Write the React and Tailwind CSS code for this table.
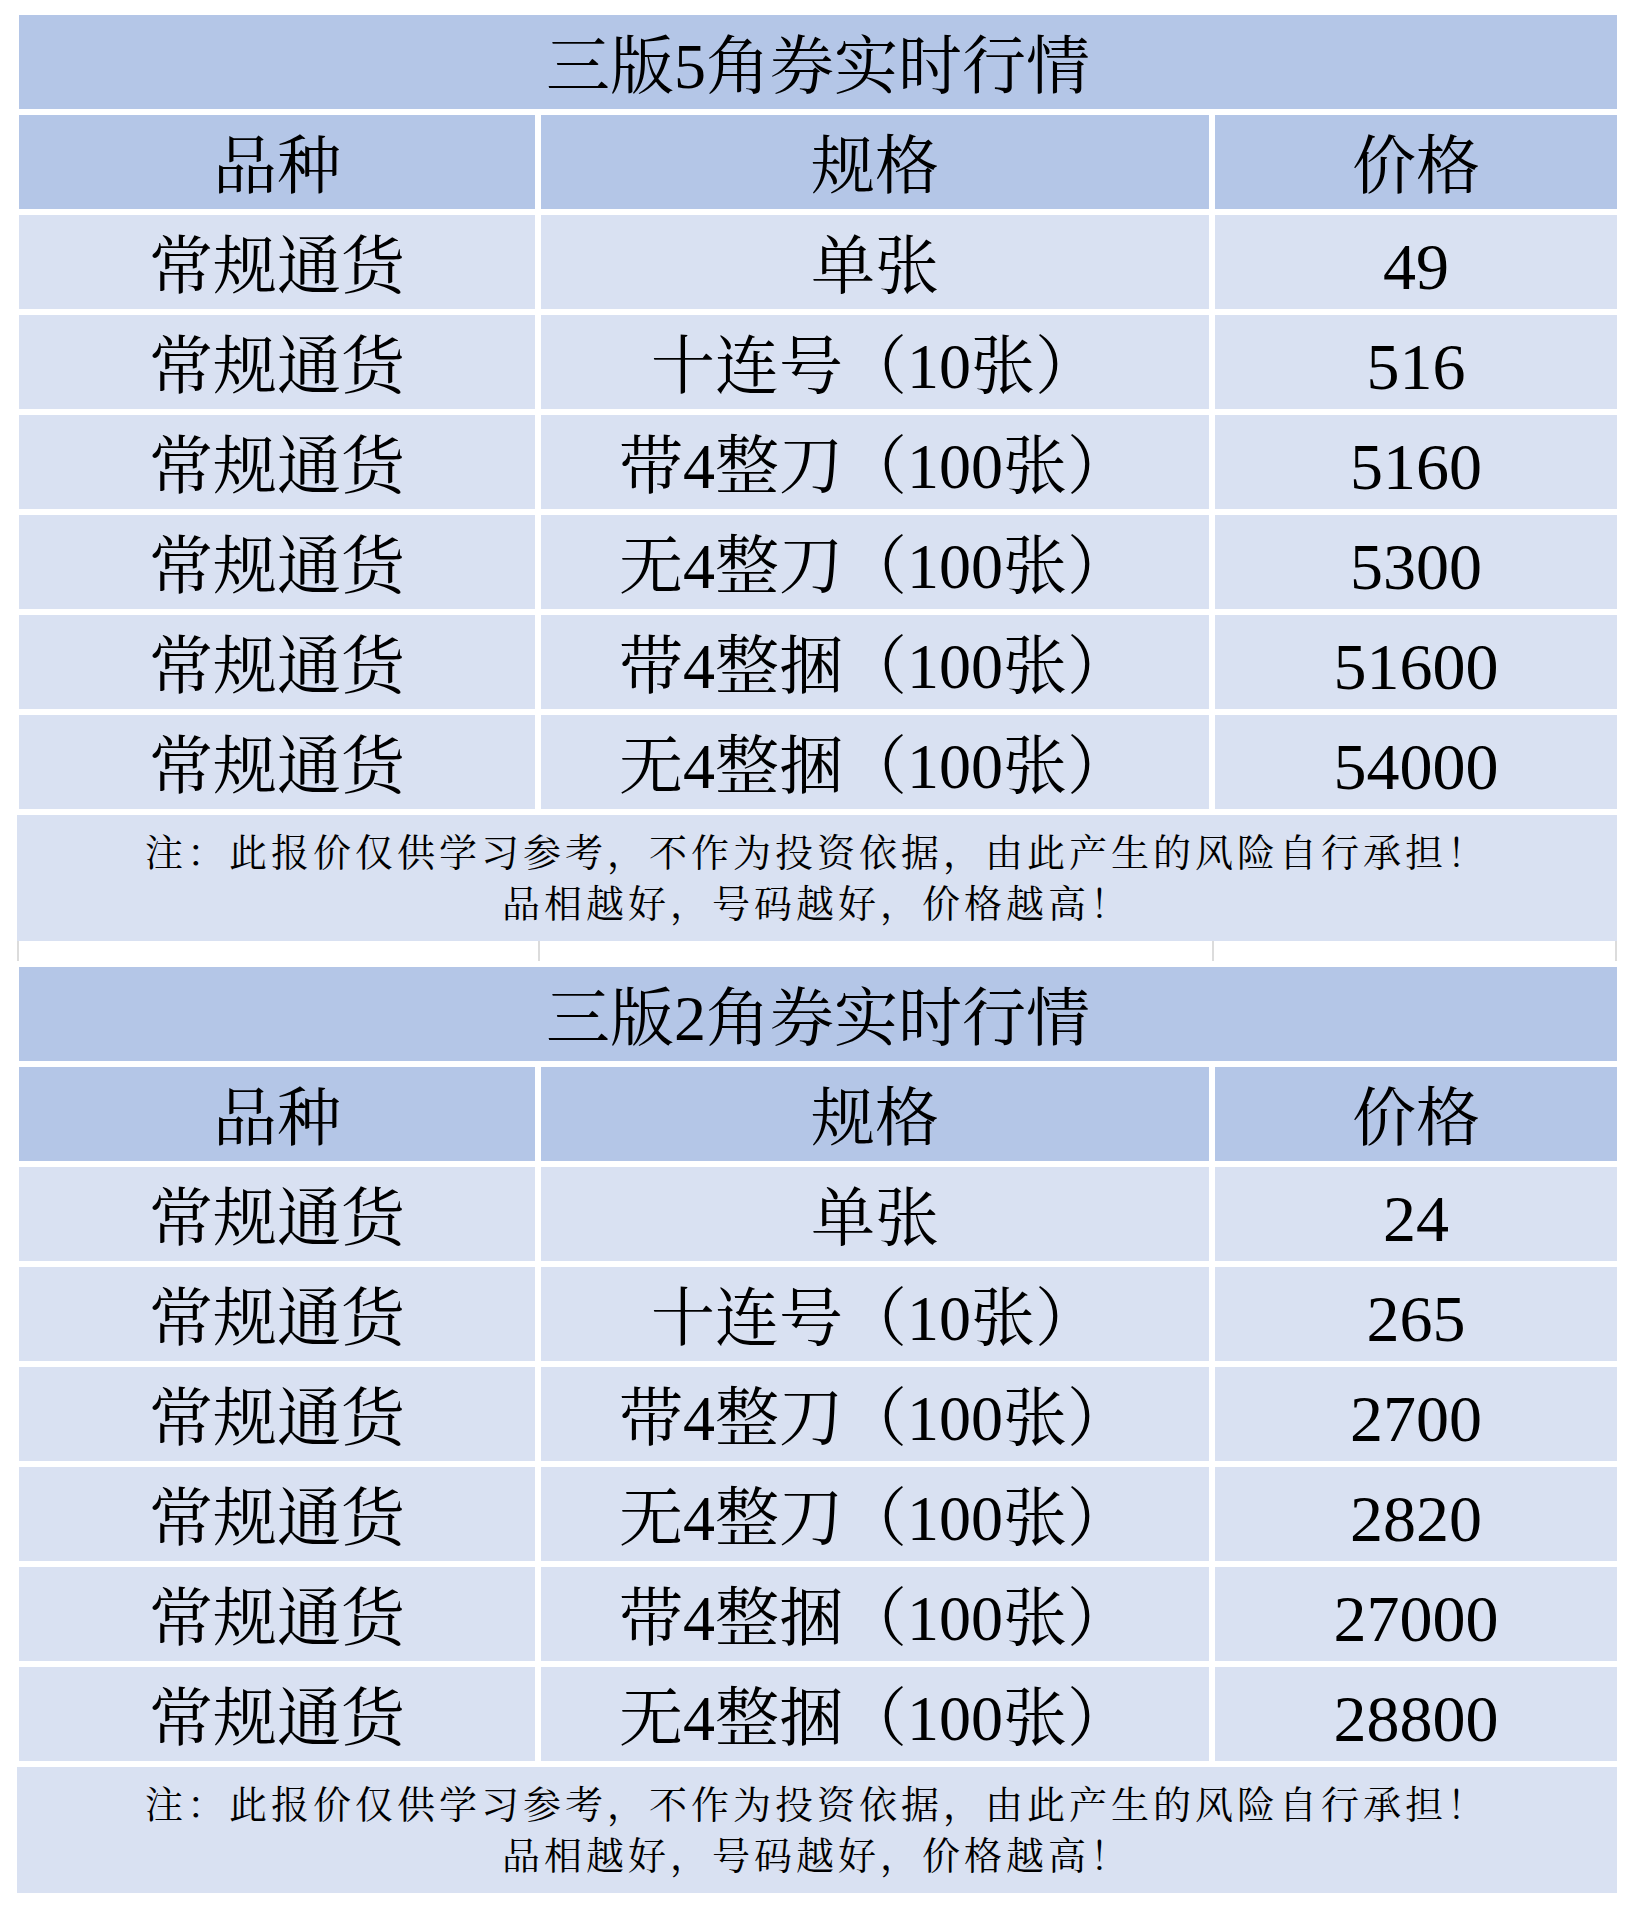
import React from "react";

const FONT = { fontFamily: '"Liberation Serif", "Noto Serif CJK SC", "Noto Sans CJK SC", serif' };

const sections = [
  {
    title: "三版5角券实时行情",
    rows: [
      ["单张", "49"],
      ["十连号（10张）", "516"],
      ["带4整刀（100张）", "5160"],
      ["无4整刀（100张）", "5300"],
      ["带4整捆（100张）", "51600"],
      ["无4整捆（100张）", "54000"],
    ],
  },
  {
    title: "三版2角券实时行情",
    rows: [
      ["单张", "24"],
      ["十连号（10张）", "265"],
      ["带4整刀（100张）", "2700"],
      ["无4整刀（100张）", "2820"],
      ["带4整捆（100张）", "27000"],
      ["无4整捆（100张）", "28800"],
    ],
  },
];

function Cell({ children, head, big }) {
  return (
    <div
      className={`h-[94px] flex items-center justify-center pt-[10px] leading-none text-black ${
        big ? "text-[66px]" : "text-[64px]"
      } ${head ? "bg-[#b4c6e7]" : "bg-[#d9e1f2]"}`}
    >
      {children}
    </div>
  );
}

function Row({ cells, head }) {
  return (
    <div className="grid grid-cols-[516px_668px_402px] gap-[6px]">
      {cells.map((c, i) => (
        <Cell key={i} head={head} big={!head && i === 2}>
          {c}
        </Cell>
      ))}
    </div>
  );
}

function Note() {
  return (
    <div className="-ml-[2px] w-[1600px] h-[126px] bg-[#d9e1f2] flex flex-col items-center justify-center pt-[2px] text-[38px] leading-[51px] tracking-[4px] text-black">
      <div>注：此报价仅供学习参考，不作为投资依据，由此产生的风险自行承担！</div>
      <div>品相越好，号码越好，价格越高！</div>
    </div>
  );
}

function Section({ s }) {
  return (
    <div className="flex flex-col gap-[6px]">
      <div className="h-[94px] bg-[#b4c6e7] flex items-center justify-center pt-[10px] text-[64px] leading-none text-black">
        {s.title}
      </div>
      <Row head cells={["品种", "规格", "价格"]} />
      {s.rows.map((r, i) => (
        <Row key={i} cells={["常规通货", r[0], r[1]]} />
      ))}
    </div>
  );
}

export default function App() {
  return (
    <div className="w-[1632px] h-[1908px] bg-white pt-[15px] pl-[19px]" style={FONT}>
      <div className="w-[1598px] flex flex-col">
        <Section s={sections[0]} />
        <div className="mt-[6px]">
          <Note />
        </div>
        <div className="-ml-[2px] w-[1600px] h-[20px] flex">
          <div className="w-[521px] h-full border-l-2 border-[#dcdcdc]" />
          <div className="w-[674px] h-full border-l-2 border-[#dcdcdc]" />
          <div className="flex-1 h-full border-l-2 border-r-2 border-[#dcdcdc]" />
        </div>
        <div className="mt-[6px]">
          <Section s={sections[1]} />
        </div>
        <div className="mt-[6px]">
          <Note />
        </div>
      </div>
    </div>
  );
}
